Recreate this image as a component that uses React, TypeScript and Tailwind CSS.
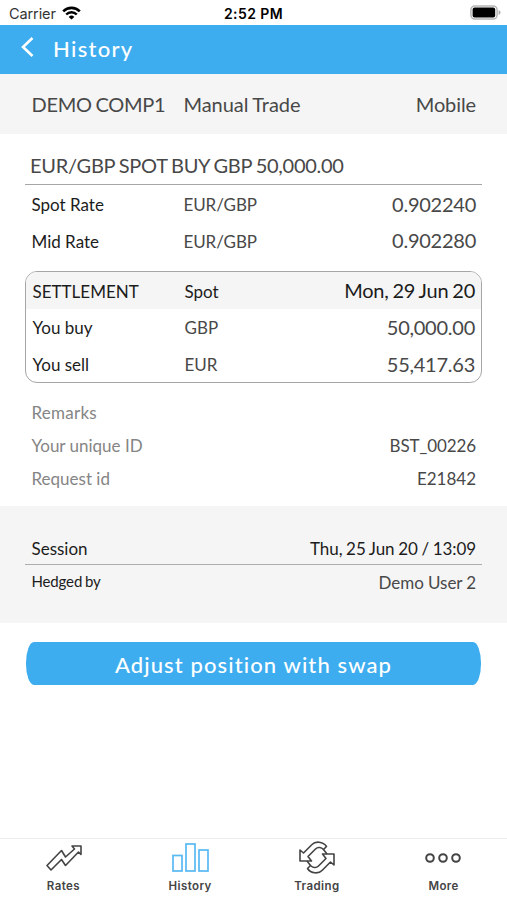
import type { ReactNode } from 'react';

type RowProps = {
  label: string;
  middle?: string;
  value?: string;
  className?: string;
  labelClass?: string;
  middleClass?: string;
  valueClass?: string;
};

const amount = 'text-[20px] tracking-[-0.25px] [word-spacing:-0.9px]';

function Row({ label, middle, value, className = '', labelClass = '', middleClass = '', valueClass = '' }: RowProps) {
  return (
    <div className={`flex items-center whitespace-nowrap ${className}`}>
      <span className={`w-[152px] shrink-0 ${labelClass}`}>{label}</span>
      <span className={`flex-1 ${middleClass}`}>{middle}</span>
      <span className={valueClass}>{value}</span>
    </div>
  );
}

function StatusBar() {
  return (
    <div className="flex h-[25px] items-center bg-white pl-[9px] pr-[9px] pt-[3px] font-['Inter',sans-serif] text-black">
      <div className="flex flex-1 items-center gap-[6px]">
        <span className="text-[14.5px] leading-none tracking-[-0.1px] text-[#333]">Carrier</span>
        <svg width="19" height="14" viewBox="0 0 19 14" className="-mt-[2px]" fill="none" stroke="#000">
          <path d="M1.2 5.3a11.8 11.8 0 0 1 16.6 0" strokeWidth="2.6" />
          <path d="M4.2 8.5a7.5 7.5 0 0 1 10.6 0" strokeWidth="2.4" />
          <path d="M9.5 13.6 6.7 10.9a4 4 0 0 1 5.6 0z" fill="#000" stroke="none" />
        </svg>
      </div>
      <span className="text-[14px] font-semibold leading-none tracking-[0.4px]">2:52 PM</span>
      <div className="flex flex-1 justify-end">
        <svg width="31" height="15" viewBox="0 0 31 15" className="-mr-[3px] -mt-[3px]">
          <rect x="0.9" y="0.9" width="26.2" height="13.2" rx="4" fill="#fff" stroke="#b5b5b5" strokeWidth="1.5" />
          <rect x="2.6" y="2.6" width="22.6" height="9.8" rx="2" fill="#000" />
          <path d="M28.6 5.2c1.2.4 1.9 1.2 1.9 2.3s-.7 1.900-1.9 2.300z" fill="#aaa" />
        </svg>
      </div>
    </div>
  );
}

function Tab({ label, children }: { label: string; children: ReactNode }) {
  return (
    <div className="flex flex-1 flex-col items-center">
      <div className="flex h-[40px] items-center justify-center pb-[3px]">{children}</div>
      <span className="text-[11.5px] font-semibold leading-[14px] tracking-[0.4px] text-[#444]">{label}</span>
    </div>
  );
}

export default function App() {
  return (
    <div className="flex h-[900px] w-[507px] flex-col overflow-hidden bg-white font-['Lato',sans-serif] leading-none text-[#484848]">
      <StatusBar />

      <header className="flex h-[49px] items-center bg-[#3dadf0] pl-[21px] text-white">
        <svg width="13" height="20" viewBox="0 0 13 20" className="-mt-[5px]" fill="none" stroke="#fff" strokeWidth="2.6">
          <path d="M11.500 1 2 10l9.500 9" />
        </svg>
        <h1 className="ml-[19px] pb-[2px] text-[22px] font-medium tracking-[1.3px]">History</h1>
      </header>

      <section className="h-[60px] bg-[#f5f5f5] pl-[31.5px] pr-[31px]">
        <Row
          className="h-full text-[20px]"
          labelClass="tracking-[-0.3px] [word-spacing:-1px]"
          middleClass="tracking-[-0.05px] [word-spacing:-0.6px]"
          valueClass="tracking-[-0.1px]"
          label="DEMO COMP1"
          middle="Manual Trade"
          value="Mobile"
        />
      </section>

      <section className="mx-[25px] mt-[14px]">
        <h2 className="flex h-[37px] items-center border-b border-[#a6a6a6] pb-[2px] pl-[5px] text-[20px] tracking-[-0.27px] [word-spacing:-0.9px]">
          <span>EUR/GBP SPOT BUY GBP 50,000.00</span>
        </h2>
        <div className="pl-[6.5px] pr-[6px] pt-px">
          <Row className="h-[37px] text-[17px]" labelClass="text-[#1c1c1c]" label="Spot Rate" middle="EUR/GBP" middleClass="tracking-[-0.1px]" value="0.902240" valueClass={`${amount} pb-[2px]`} />
          <Row className="h-[37px] pb-px text-[17px]" labelClass="text-[#1c1c1c]" label="Mid Rate" middle="EUR/GBP" middleClass="tracking-[-0.1px]" value="0.902280" valueClass={`${amount} pb-[2px]`} />
        </div>
      </section>

      <section className="mx-[25px] mt-[11px] h-[112px] overflow-hidden rounded-[12px] border-[1.500px] border-[#a6a6a6]">
        <Row className="h-[37px] bg-[#f5f5f5] pl-[6.5px] pr-[6px] pt-px text-[17px] text-[#1c1c1c]" label="SETTLEMENT" middle="Spot" value="Mon, 29 Jun 20" valueClass={`${amount} pb-[2px]`} />
        <Row className="h-[37px] pl-[6.5px] pr-[6px] text-[17px]" labelClass="text-[#1c1c1c]" label="You buy" middle="GBP" value="50,000.00" valueClass={`${amount} pb-[2px]`} />
        <Row className="h-[36px] pl-[6.5px] pr-[6px] text-[17px]" labelClass="text-[#1c1c1c]" label="You sell" middle="EUR" value="55,417.63" valueClass={`${amount} pb-px`} />
      </section>

      <section className="pl-[31.5px] pr-[31px] pt-[13px] text-[17px]">
        <Row className="h-[33px]" labelClass="text-[#858585] tracking-[0.25px]" label="Remarks" />
        <Row className="h-[33px]" labelClass="text-[#858585]" label="Your unique ID" value="BST_00226" valueClass="tracking-[-0.1px]" />
        <Row className="h-[33px]" labelClass="text-[#858585]" label="Request id" value="E21842" />
      </section>

      <section className="mt-[11px] h-[117px] bg-[#f5f5f5] px-[25px] pt-[25px]">
        <Row className="h-[34px] border-b border-[#adadad] pl-[6.5px] pr-[6px] pt-px text-[17px] text-[#1c1c1c]" label="Session" value="Thu, 25 Jun 20 / 13:09" valueClass="tracking-[-0.08px] [word-spacing:-0.6px]" />
        <Row className="h-[34px] pl-[6.5px] pr-[6px] text-[15px]" labelClass="pb-[2px] tracking-[-0.15px] [word-spacing:-0.9px] text-[#1c1c1c]" label="Hedged by" value="Demo User 2" valueClass="text-[17px] [word-spacing:-0.4px]" />
      </section>

      <button className="mx-[26px] mt-[19px] h-[43px] rounded-[8px/21px] bg-[#3dadf0] pt-[2px] text-[22px] font-medium tracking-[1.1px] text-white">
        Adjust position with swap
      </button>

      <nav className="mt-auto flex h-[62px] border-t border-[#ececec] font-['Inter',sans-serif]">
        <Tab label="Rates">
          <svg width="36" height="26" viewBox="0 0 36 26" className="ml-[2px]" fill="none" stroke="#444" strokeWidth="1.600" strokeLinejoin="round">
            <path d="M1 20.500 15.500 5.500l4 6.500 9-8-2.500-3H35v8.500L32.500 7 19.500 20.500l-4-6L5 25z" />
          </svg>
        </Tab>
        <Tab label="History">
          <svg width="37" height="29" viewBox="0 0 37 29" fill="none" stroke="#58b9f3" strokeWidth="1.700">
            <rect x="1" y="12.500" width="9" height="15.500" />
            <rect x="14" y="1" width="9" height="27" />
            <rect x="27" y="7" width="9" height="21" />
          </svg>
        </Tab>
        <Tab label="Trading">
          <svg width="36" height="33" viewBox="0 0 36 33" fill="none" stroke="#444" strokeWidth="1.600" strokeLinejoin="round">
            <path d="M1 9 4.500 12 13 3.500C16 .2 24 0 27.500 5.500L24.500 8.500C22.500 6.500 19 5.500 16.500 8L9 15.500l3.500 4.500H1z" />
            <path d="M35 24 31.500 21 23 29.500C20 32.800 12 33 8.500 27.500L11.500 24.500c2 2 5.500 3 8 .5L27 17.500 23.500 13H35z" />
            <path d="M24.500 8.500 28 13M11.500 24.500 8 20" />
          </svg>
        </Tab>
        <Tab label="More">
          <svg width="36" height="10" viewBox="0 0 36 10" className="-ml-px" fill="none" stroke="#444" strokeWidth="2">
            <circle cx="5" cy="5" r="3.800" />
            <circle cx="18" cy="5" r="3.800" />
            <circle cx="31" cy="5" r="3.800" />
          </svg>
        </Tab>
      </nav>
    </div>
  );
}
